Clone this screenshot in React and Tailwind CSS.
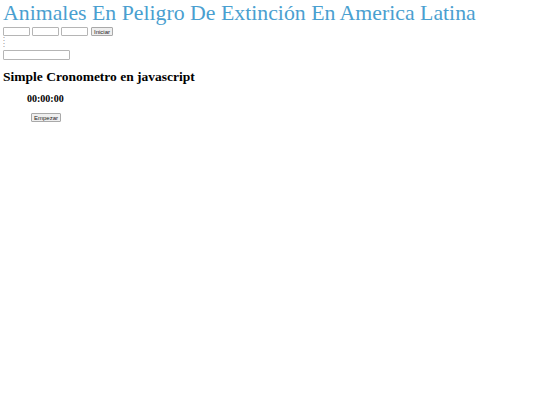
const sans = "font-['Liberation_Sans',sans-serif]";
const serif = "font-['Liberation_Serif',serif]";

function Box({ className = '' }) {
  return <input className={`h-[9px] border border-[#b5b5b5] rounded-[1px] bg-white ${className}`} />;
}

function SmallButton({ children, className = '' }) {
  return (
    <button className={`h-[9px] border border-[#a9a9a9] rounded-[1px] bg-[#efefef] text-[6px] leading-none text-[#222] font-['Liberation_Sans',sans-serif] ${className}`}>
      {children}
    </button>
  );
}

export default function App() {
  return (
    <div className={`bg-white min-h-screen px-[3px] ${serif}`}>
      <h1 className="text-[21.8px] leading-[27px] text-[#4a9fd0]">
        Animales En Peligro De Extinción En America Latina
      </h1>
      <div className="flex items-center gap-[2px]">
        <Box className="w-[27px]" />
        <Box className="w-[27px]" />
        <Box className="w-[27px]" />
        <SmallButton className="ml-[1px] w-[22px]">Iniciar</SmallButton>
      </div>
      <div className={`text-[7px] leading-[6px] text-[#444] ${sans}`}>
        <div>:</div>
        <div>:</div>
      </div>
      <Box className="block mt-[2px] w-[67px] h-[10px]" />
      <h2 className="mt-[8px] text-[13.5px] leading-[17px] font-bold text-black">
        Simple Cronometro en javascript
      </h2>
      <div className="ml-[24px] mt-[7px] text-[10px] leading-[13px] font-bold text-black">
        00:00:00
      </div>
      <SmallButton className="block ml-[28px] mt-[8px] w-[30px]">Empezar</SmallButton>
    </div>
  );
}
